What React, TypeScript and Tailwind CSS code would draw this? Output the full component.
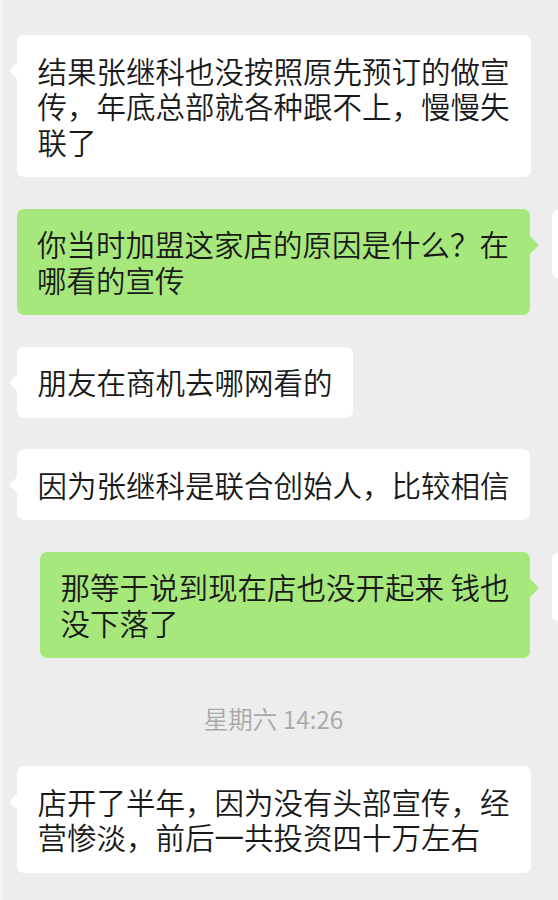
import React from "react";

type Msg =
  | { kind: "in"; text: React.ReactNode }
  | { kind: "out"; text: React.ReactNode }
  | { kind: "time"; text: string };

const messages: Msg[] = [
  { kind: "in", text: "结果张继科也没按照原先预订的做宣传，年底总部就各种跟不上，慢慢失联了" },
  { kind: "out", text: "你当时加盟这家店的原因是什么？在哪看的宣传" },
  { kind: "in", text: "朋友在商机去哪网看的" },
  { kind: "in", text: "因为张继科是联合创始人，比较相信" },
  {
    kind: "out",
    text: (
      <>
        那等于说到现在店也没开起来 钱也
        <br />
        没下落了
      </>
    ),
  },
  { kind: "time", text: "星期六 14:26" },
  { kind: "in", text: "店开了半年，因为没有头部宣传，经营惨淡，前后一共投资四十万左右" },
];

const font = { fontFamily: '"Noto Sans CJK SC", "Noto Sans", sans-serif' };

function Incoming({ children }: { children: React.ReactNode }) {
  return (
    <div className="flex pl-[17px]">
      <div className="relative max-w-[513.5px] rounded-[7px] bg-white px-[20.5px] py-[17.75px] text-[29.5px] font-[350] leading-[35.5px] text-[#191919]">
        <svg className="absolute left-[-8px] top-[27px]" width="9" height="18" viewBox="0 0 9 18">
          <path d="M9 0 L1.2 7.8 Q0 9 1.2 10.2 L9 18 Z" fill="#ffffff" />
        </svg>
        {children}
      </div>
    </div>
  );
}

function Outgoing({ children }: { children: React.ReactNode }) {
  return (
    <div className="flex items-start justify-end pr-[28px]">
      <div className="relative max-w-[513.5px] rounded-[7px] bg-[#a7e87c] px-[20.5px] py-[17.75px] text-[29.5px] font-[350] leading-[35.5px] text-[#191919]">
        <svg className="absolute right-[-9px] top-[27px]" width="9" height="18" viewBox="0 0 9 18">
          <path d="M0 0 L7.8 7.8 Q9 9 7.8 10.2 L0 18 Z" fill="#a7e87c" />
        </svg>
        {children}
      </div>
      <div className="mr-[-92px] ml-[22px] mt-[1px] h-[68px] w-[70px] shrink-0 rounded-[6px] bg-white" />
    </div>
  );
}

export default function App() {
  return (
    <div
      className="min-h-screen w-full overflow-hidden border-l-[3px] border-[#f4f4f4] bg-[#ededed] pt-[35px]"
      style={font}
    >
      <div className="-ml-[3px] flex flex-col gap-[31.5px] pb-10">
        {messages.map((m, i) => {
          if (m.kind === "time") {
            return (
              <div
                key={i}
                className="mt-[14px] mb-[1px] pr-[11px] text-center text-[24.5px] font-[350] leading-[30px] text-[#a8a8a8]"
              >
                {m.text}
              </div>
            );
          }
          if (m.kind === "out") return <Outgoing key={i}>{m.text}</Outgoing>;
          return <Incoming key={i}>{m.text}</Incoming>;
        })}
      </div>
    </div>
  );
}
